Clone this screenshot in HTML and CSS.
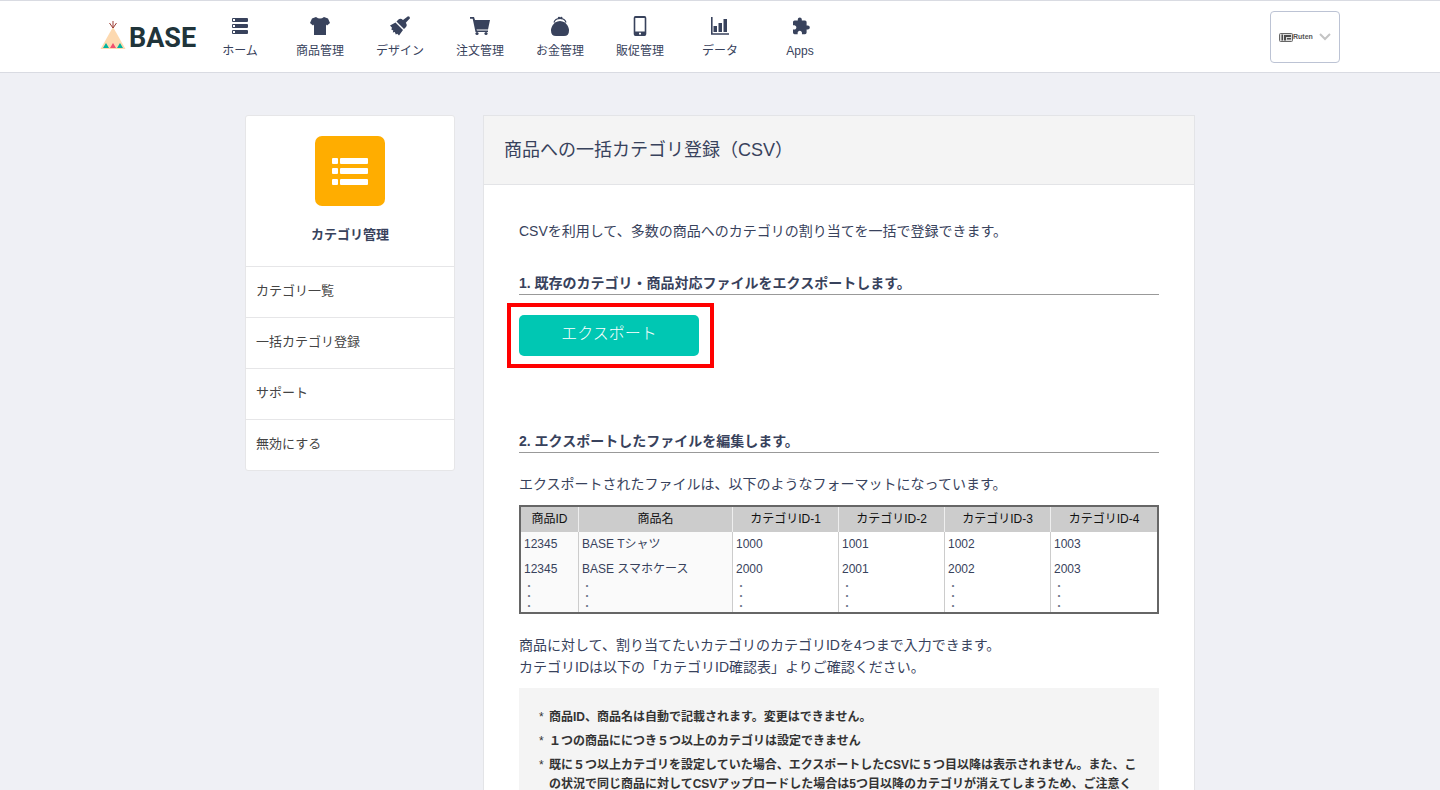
FILE: index.html
```
<!DOCTYPE html>
<html lang="ja">
<head>
  <meta charset="UTF-8" />
  <meta name="viewport" content="width=device-width, initial-scale=1.0" />
  <title>商品への一括カテゴリ登録（CSV）</title>
  <link rel="stylesheet" href="styles.css">
</head>
<body>
  <header class="site-header">
    <div class="header-inner">
      <a href="#" class="logo">
        <svg class="logo-mark" viewBox="0 0 26 30" aria-hidden="true">
          <path d="M13 7L25.500 29H.5z" fill="#fdd9b0"/>
          <path d="M13 8L9.500 3M13 8V1M13 8l3.500-5" fill="none" stroke="#9c3b32" stroke-width="1"/>
          <path d="M3 28l3-5 3 5zM17 28l3-5 3 5z" fill="#00b4a0"/>
          <path d="M10 28l3-5 3 5z" fill="#f0506e"/>
        </svg>
        <span>BASE</span>
      </a>
      <nav>
        <ul class="nav-links">
          <li><a href="#">
            <svg viewBox="0 0 24 24"><path d="M5 4h14q1 0 1 1v2q0 1-1 1H5q-1 0-1-1V5q0-1 1-1zM5 10h14q1 0 1 1v2q0 1-1 1H5q-1 0-1-1v-2q0-1 1-1zM5 16h14q1 0 1 1v2q0 1-1 1H5q-1 0-1-1v-2q0-1 1-1z"/><path d="M5 5h2v2H5zM5 11h2v2H5zM5 17h2v2H5z" fill="#fff"/></svg>
            <span>ホーム</span></a></li>
          <li><a href="#">
            <svg viewBox="0 0 24 24"><path d="M8 3q4 3 8 0l4 1.500L22 9l-3 2.500-1-1V21H6V10.500l-1 1L2 9l2-4.500z"/></svg>
            <span>商品管理</span></a></li>
          <li><a href="#">
            <svg viewBox="0 0 24 24"><path d="M20 2.300q2 0 2 2L17.800 8.800q1.800 2.500.2 4.200l-2 2L8.500 7.500l2-2q2-1.500 4.500.5zM7.500 8.500l7.500 7.500-4 5.500-1.700-1.700-1.500.7-1-2.500-2 .5.500-2-2-1 .7-1.700L2 11.500z"/></svg>
            <span>デザイン</span></a></li>
          <li><a href="#">
            <svg viewBox="0 0 24 24"><path d="M2 3h4l1 3h15l-2 9.500H8.500l.5 1h11V18H7.500L4.700 4.700H2z"/><circle cx="9" cy="19.500" r="1.600"/><circle cx="18" cy="19.500" r="1.600"/></svg>
            <span>注文管理</span></a></li>
          <li><a href="#">
            <svg viewBox="0 0 24 24"><path d="M7 8.500q5-3 10 0 4 4 4 8 0 5.500-5 5.500H8q-5 0-5-5.500 0-4 4-8z"/><path d="M6 8.500Q7 4.500 12 4.500t6 4" fill="none" stroke="#38425c" stroke-width="1.200"/><circle cx="11" cy="4" r="1.200"/><circle cx="13.300" cy="4" r="1.200"/></svg>
            <span>お金管理</span></a></li>
          <li><a href="#">
            <svg viewBox="0 0 24 24"><path fill-rule="evenodd" d="M7.500 2h9Q18.300 2 18.300 4v16q0 2-1.800 2h-9q-1.800 0-1.800-2V4q0-2 1.800-2zM7.300 4v13.500h9.400V4zM11 18.800v1.700h2v-1.700z"/></svg>
            <span>販促管理</span></a></li>
          <li><a href="#">
            <svg viewBox="0 0 24 24"><path d="M3 3h1.600v16.200H21v1.600H3zM5.500 12h3.500v6H5.500zM10.500 9H14v9h-3.500zM15.500 5h3.500v13h-3.500z"/></svg>
            <span>データ</span></a></li>
          <li><a href="#">
            <svg viewBox="0 0 24 24"><path transform="translate(3.400 2.600) scale(.8)" d="M20.500 11H19V7c0-1.100-.9-2-2-2h-4V3.500C13 2.120 11.880 1 10.500 1S8 2.120 8 3.500V5H4c-1.100 0-2 .9-2 2v3.800h1.500c1.490 0 2.700 1.210 2.700 2.700s-1.210 2.700-2.700 2.700H2V20c0 1.100.9 2 2 2h3.800v-1.500c0-1.490 1.210-2.700 2.700-2.700s2.700 1.210 2.700 2.700V22H17c1.100 0 2-.9 2-2v-4h1.500c1.380 0 2.500-1.120 2.500-2.500S21.880 11 20.500 11z"/></svg>
            <span>Apps</span></a></li>
        </ul>
      </nav>
      <button type="button" class="account">
        <svg class="account-mark" viewBox="0 0 14 9" aria-hidden="true">
          <rect x="0.500" y="0.500" width="13" height="8" rx="1" fill="#ddd" stroke="#666"/>
          <path d="M2.500 1.500H4v6H2.500zM5 2h7v2H7v3.500H5zM8 5h4v1.500H8z" fill="#4c4c4c"/>
        </svg>
        <span class="account-name">Ruten</span>
        <svg class="chevron" viewBox="0 0 12 8" aria-hidden="true"><path d="M1 1l5 5 5-5" fill="none" stroke="#c4c4c4" stroke-width="2"/></svg>
      </button>
    </div>
  </header>

  <div class="container">
    <aside class="sidebar">
      <div class="app-head">
        <svg class="app-icon" viewBox="0 0 70 70" aria-hidden="true">
          <rect width="70" height="70" rx="7" fill="#ffad00"/>
          <g fill="#fff">
            <rect x="17" y="22" width="6" height="6" rx="1"/><rect x="25" y="22" width="28" height="6" rx="1"/>
            <rect x="17" y="32" width="6" height="6" rx="1"/><rect x="25" y="32" width="28" height="6" rx="1"/>
            <rect x="17" y="43" width="6" height="6" rx="1"/><rect x="25" y="43" width="28" height="6" rx="1"/>
          </g>
        </svg>
        <h2>カテゴリ管理</h2>
      </div>
      <ul class="side-menu">
        <li><a href="#">カテゴリ一覧</a></li>
        <li><a href="#">一括カテゴリ登録</a></li>
        <li><a href="#">サポート</a></li>
        <li><a href="#">無効にする</a></li>
      </ul>
    </aside>

    <main class="panel">
      <h1>商品への一括カテゴリ登録（CSV）</h1>
      <div class="panel-body">
        <p class="lead">CSVを利用して、多数の商品へのカテゴリの割り当てを一括で登録できます。</p>

        <section class="export">
          <h3>1. 既存のカテゴリ・商品対応ファイルをエクスポートします。</h3>
          <div class="export-action">
            <button type="button" class="btn">エクスポート</button>
          </div>
        </section>

        <section>
          <h3>2. エクスポートしたファイルを編集します。</h3>
          <p class="format-text">エクスポートされたファイルは、以下のようなフォーマットになっています。</p>
          <table class="format">
            <colgroup>
              <col class="col-id"><col class="col-name"><col><col><col><col>
            </colgroup>
            <thead>
              <tr><th>商品ID</th><th>商品名</th><th>カテゴリID-1</th><th>カテゴリID-2</th><th>カテゴリID-3</th><th>カテゴリID-4</th></tr>
            </thead>
            <tbody>
              <tr><td>12345</td><td>BASE Tシャツ</td><td>1000</td><td>1001</td><td>1002</td><td>1003</td></tr>
              <tr><td>12345</td><td>BASE スマホケース</td><td>2000</td><td>2001</td><td>2002</td><td>2003</td></tr>
              <tr class="dots"><td>・<br>・<br>・</td><td>・<br>・<br>・</td><td>・<br>・<br>・</td><td>・<br>・<br>・</td><td>・<br>・<br>・</td><td>・<br>・<br>・</td></tr>
            </tbody>
          </table>
          <p>商品に対して、割り当てたいカテゴリのカテゴリIDを4つまで入力できます。<br>カテゴリIDは以下の「カテゴリID確認表」よりご確認ください。</p>
          <ul class="notes">
            <li>商品ID、商品名は自動で記載されます。変更はできません。</li>
            <li>１つの商品ににつき５つ以上のカテゴリは設定できません</li>
            <li>既に５つ以上カテゴリを設定していた場合、エクスポートしたCSVに５つ目以降は表示されません。また、この状況で同じ商品に対してCSVアップロードした場合は5つ目以降のカテゴリが消えてしまうため、ご注意く</li>
          </ul>
        </section>
      </div>
    </main>
  </div>
</body>
</html>
```
FILE: styles.css
```
* {
  box-sizing: border-box;
}

body {
  margin: 0;
  background-color: #eff0f5;
  color: #38425c;
  font-family: "Liberation Sans", "Noto Sans CJK JP", sans-serif;
  font-size: 14px;
  line-height: 22px;
}

h1, h2, h3, p, ul {
  margin: 0;
  padding: 0;
}

ul {
  list-style: none;
}

a {
  color: inherit;
  text-decoration: none;
}

svg {
  display: block;
}

.site-header {
  background-color: #fff;
  border-top: 1px solid #d9dbe2;
  border-bottom: 1px solid #d9dbe2;
}

.header-inner {
  display: flex;
  align-items: flex-start;
  max-width: 1240px;
  height: 71px;
  margin: 0 auto;
}

.logo {
  display: flex;
  width: 100px;
  padding-top: 19px;
  gap: 3px;
  color: #20343a;
  font-family: Roboto, sans-serif;
  font-size: 27px;
  font-weight: bold;
  line-height: 36px;
}

.logo-mark {
  width: 26px;
  height: 30px;
  flex: none;
}

.nav-links {
  display: flex;
}

.nav-links a {
  display: flex;
  flex-direction: column;
  align-items: center;
  gap: 1px;
  width: 80px;
  padding-top: 13px;
  font-size: 12px;
  line-height: 24px;
}

.nav-links svg {
  width: 24px;
  height: 24px;
  fill: #38425c;
}

.account {
  display: flex;
  align-items: center;
  width: 70px;
  height: 52px;
  margin: 10px 0 0 auto;
  padding: 0 8px;
  background-color: #fff;
  border: 1px solid #bcc3d4;
  border-radius: 4px;
  cursor: pointer;
}

.account-mark {
  width: 14px;
  height: 9px;
  flex: none;
}

.account-name {
  color: #555;
  font-family: "Liberation Sans", sans-serif;
  font-size: 7px;
  font-weight: bold;
  line-height: 10px;
}

.chevron {
  width: 12px;
  height: 8px;
  margin-left: auto;
  flex: none;
}

.container {
  display: flex;
  align-items: flex-start;
  gap: 28px;
  max-width: 950px;
  margin: 42px auto 0;
}

.sidebar {
  width: 210px;
  flex: none;
  background-color: #fff;
  border: 1px solid #e6e6e8;
  border-radius: 3px;
  font-size: 13px;
}

.app-head {
  padding: 20px 0;
  text-align: center;
}

.app-icon {
  width: 70px;
  height: 70px;
  margin: 0 auto 18px;
}

.app-head h2 {
  font-size: 13px;
  line-height: 22px;
}

.side-menu a {
  display: block;
  padding: 13px 10px 15px;
  border-top: 1px solid #e6e6e8;
  color: #444;
}

.panel {
  flex: 1;
  background-color: #fff;
  border: 1px solid #e3e4e7;
}

.panel h1 {
  padding: 20px;
  background-color: #f4f4f4;
  border-bottom: 1px solid #e3e4e7;
  font-size: 18px;
  font-weight: normal;
  line-height: 28px;
}

.panel-body {
  padding: 35px 35px 0;
}

.lead {
  margin-bottom: 30px;
}

.panel h3 {
  border-bottom: 1px solid #999;
  font-size: 14px;
  line-height: 22px;
}

.export {
  margin-bottom: 74px;
}

.export-action {
  position: relative;
  width: 180px;
  margin-top: 20px;
}

/* red frame around the export button */
.export-action::after {
  content: "";
  position: absolute;
  inset: -12px -15px -12px -12px;
  border: 4px solid #f00;
  pointer-events: none;
}

.btn {
  display: block;
  width: 100%;
  height: 41px;
  padding: 0 0 7px;
  background-color: #00c7b3;
  border: none;
  border-radius: 5px;
  color: #fff;
  font-family: inherit;
  font-size: 16px;
  font-weight: 300;
  cursor: pointer;
}

.format-text {
  margin: 20px 0 10px;
}

.format {
  width: 100%;
  margin-bottom: 20px;
  table-layout: fixed;
  border: 2px solid #666;
  border-collapse: separate;
  border-spacing: 0;
  font-size: 12px;
  line-height: 25px;
}

.col-id {
  width: 58px;
}

.col-name {
  width: 154px;
}

.format th {
  padding: 0 3px;
  background-color: #ccc;
  border-right: 1px solid #eee;
  color: #111;
  font-weight: normal;
}

.format td {
  padding: 0 3px;
  border-right: 1px solid #ccc;
}

.format th:last-child,
.format td:last-child {
  border-right: none;
}

.format td:nth-child(-n+2) {
  background-color: #fafafa;
}

.format .dots td {
  color: #6b7388;
  font-size: 10px;
  line-height: 10px;
}

.notes {
  margin-top: 10px;
  padding: 20px;
  background-color: #f4f4f4;
  color: #333;
  font-size: 12px;
  font-weight: bold;
  line-height: 19px;
}

.notes li {
  display: flex;
  margin-bottom: 5px;
}

.notes li::before {
  content: "*";
  width: 10px;
  flex: none;
  font-weight: normal;
}
```
